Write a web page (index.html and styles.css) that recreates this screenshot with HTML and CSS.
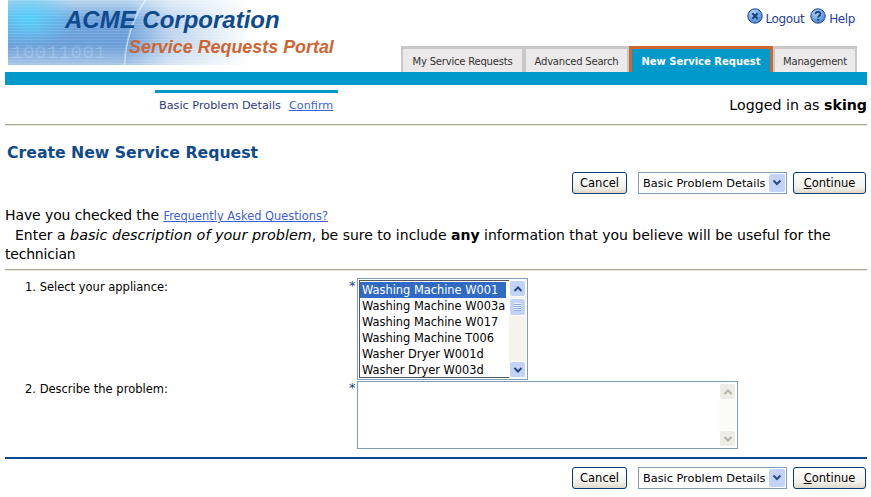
FILE: index.html
```html
<!DOCTYPE html>
<html lang="en-US">
<head>
    <title>Create New Service Request</title>
    <meta charset="utf-8">
    <link rel="stylesheet" href="styles.css">
</head>
<body>
    <div class="header">
        <div class="logo">
            <span class="logo-bits">10011001</span>
            <span class="logo-title">ACME Corporation</span>
            <span class="logo-sub">Service Requests Portal</span>
        </div>
        <div class="header-right">
            <div class="global-links">
                <svg class="icon" viewBox="0 0 16 16"><defs><radialGradient id="ball" cx="40%" cy="30%" r="75%"><stop offset="0" stop-color="#b5d6f7"/><stop offset="1" stop-color="#3f7fd0"/></radialGradient></defs><circle cx="8" cy="8" r="7.200" fill="url(#ball)" stroke="#1d4f91"/><path d="M5.300 5.300l5.400 5.400M10.700 5.300l-5.400 5.400" stroke="#123f80" stroke-width="2"/></svg>
                <a href="#">Logout</a>
                <svg class="icon" viewBox="0 0 16 16"><circle cx="8" cy="8" r="7.200" fill="url(#ball)" stroke="#1d4f91"/><path d="M5.600 6.200c0-3 4.800-3 4.800-.2 0 1.700-2.300 1.700-2.300 3.500" fill="none" stroke="#123f80" stroke-width="1.800"/><rect x="7.200" y="10.800" width="1.900" height="1.900" fill="#123f80"/></svg>
                <a href="#">Help</a>
            </div>
            <div class="tabs">
                <a class="tab tab-first" href="#">My Service Requests</a>
                <a class="tab tab-second" href="#">Advanced Search</a>
                <a class="tab tab-active" href="#">New Service Request</a>
                <a class="tab tab-last" href="#">Management</a>
            </div>
        </div>
    </div>
    <div class="bar"></div>

    <div class="subnav">
        <div class="steps">
            <span>Basic Problem Details</span>
            <a href="#">Confirm</a>
        </div>
        <div class="logged">Logged in as <b>sking</b></div>
    </div>

    <h1>Create New Service Request</h1>

    <div class="actions">
        <button class="btn btn-cancel">Cancel</button>
        <div class="combo">
            <span>Basic Problem Details</span>
            <span class="combo-arrow"><svg viewBox="0 0 10 8"><path d="M1.500 1.500L5 5l3.500-3.500" fill="none" stroke="#2c4a80" stroke-width="2"/></svg></span>
        </div>
        <button class="btn btn-continue"><u>C</u>ontinue</button>
    </div>

    <div class="intro">
        <p class="intro-check">Have you checked the <a href="#">Frequently Asked Questions?</a></p>
        <p class="intro-main">Enter a <i>basic description of your problem</i>, be sure to include <b>any</b> information that you believe will be useful for the <span class="last-word">technician</span></p>
    </div>

    <div class="form">
        <div class="row row-list">
            <label>1. Select your appliance:</label>
            <span class="star">*</span>
            <div class="listbox">
                <div class="options">
                    <div class="option selected">Washing Machine W001</div>
                    <div class="option">Washing Machine W003a</div>
                    <div class="option">Washing Machine W017</div>
                    <div class="option">Washing Machine T006</div>
                    <div class="option">Washer Dryer W001d</div>
                    <div class="option">Washer Dryer W003d</div>
                </div>
                <div class="scroll">
                    <span class="scroll-btn"><svg viewBox="0 0 10 8"><path d="M1.500 6L5 2.500 8.500 6" fill="none" stroke="#2c4a80" stroke-width="2"/></svg></span>
                    <span class="scroll-thumb"></span>
                    <span class="scroll-btn scroll-end"><svg viewBox="0 0 10 8"><path d="M1.500 2L5 5.500 8.500 2" fill="none" stroke="#2c4a80" stroke-width="2"/></svg></span>
                </div>
            </div>
        </div>
        <div class="row row-text">
            <label>2. Describe the problem:</label>
            <span class="star">*</span>
            <div class="textbox">
                <div class="scroll scroll-off">
                    <span class="scroll-btn"><svg viewBox="0 0 10 8"><path d="M1.500 6L5 2.500 8.500 6" fill="none" stroke="#b4b4a8" stroke-width="2"/></svg></span>
                    <span class="scroll-btn scroll-end"><svg viewBox="0 0 10 8"><path d="M1.500 2L5 5.500 8.500 2" fill="none" stroke="#b4b4a8" stroke-width="2"/></svg></span>
                </div>
            </div>
        </div>
    </div>

    <div class="footer-line"></div>

    <div class="actions actions-bottom">
        <button class="btn btn-cancel">Cancel</button>
        <div class="combo">
            <span>Basic Problem Details</span>
            <span class="combo-arrow"><svg viewBox="0 0 10 8"><path d="M1.500 1.500L5 5l3.500-3.500" fill="none" stroke="#2c4a80" stroke-width="2"/></svg></span>
        </div>
        <button class="btn btn-continue"><u>C</u>ontinue</button>
    </div>
</body>
</html>
```

FILE: styles.css
```css
* {
    box-sizing: border-box;
}
html {
    background-color: #fff;
}
body {
    margin: 0;
    padding: 0 4px 0 5px;
    height: 497px;
    overflow: hidden;
    font-family: "DejaVu Sans", sans-serif;
    color: #000;
}
a {
    color: #3d5fd0;
}
.header {
    display: flex;
    justify-content: space-between;
    height: 72px;
}
.logo {
    position: relative;
    width: 337px;
    height: 65px;
    margin-left: 3px;
    padding: 6px 0 0 57px;
    background:
        radial-gradient(ellipse 90px 110px at 205px 70px, rgba(255,255,255,0) 97%, rgba(255,255,255,.6) 98%, rgba(255,255,255,0) 100%),
        linear-gradient(90deg, rgba(255,255,255,0) 35%, rgba(255,255,255,.55) 48%, #fff 72%),
        repeating-linear-gradient(180deg, rgba(255,255,255,.1) 0, rgba(255,255,255,.1) 1px, rgba(255,255,255,0) 1px, rgba(255,255,255,0) 3px),
        radial-gradient(ellipse 50px 30px at 20px 18px, #55d0fb, rgba(85,208,251,0)),
        linear-gradient(180deg, #b8d6ee 0, #6fa3dc 30%, #6b9ed8 70%, #a6c6e8 100%);
    font-family: "Liberation Sans", sans-serif;
    font-weight: bold;
    font-style: italic;
}
.logo-bits {
    position: absolute;
    left: 3px;
    top: 42px;
    font-family: "Liberation Mono", monospace;
    font-size: 19px;
    font-style: normal;
    font-weight: normal;
    letter-spacing: .5px;
    color: rgba(255,255,255,.2);
}
.logo-title {
    position: relative;
    display: block;
    font-size: 24px;
    line-height: 27px;
    color: #0f4a8c;
}
.logo-sub {
    position: relative;
    display: block;
    margin: 4px 0 0 64px;
    font-size: 17.900px;
    line-height: 21px;
    color: #cc6633;
    white-space: nowrap;
}
.header-right {
    display: flex;
    flex-direction: column;
    align-items: flex-end;
    padding-right: 10px;
}
.global-links {
    display: flex;
    align-items: flex-start;
    height: 46px;
    padding: 8px 2px 0 0;
    font-size: 12px;
    line-height: 22px;
    letter-spacing: -.4px;
}
.global-links a {
    color: #1f3fa0;
    text-decoration: none;
    margin-left: 3px;
    margin-right: 6px;
}
.global-links a:last-child {
    margin-right: 0;
}
.icon {
    width: 16px;
    height: 16px;
}
.tabs {
    display: flex;
    height: 26px;
}
.tab {
    display: flex;
    align-items: center;
    justify-content: center;
    height: 26px;
    padding-top: 2px;
    border: solid #c8c8c8;
    border-width: 3px 2px 0;
    background-color: #ebe9e9;
    color: #333;
    font-size: 10px;
    letter-spacing: -.2px;
    text-decoration: none;
    white-space: nowrap;
}
.tab-first {
    width: 123px;
}
.tab-second {
    width: 105px;
}
.tab-active {
    width: 144px;
    border-color: #cc6633;
    border-width: 3px 3px 0;
    background-color: #0099cc;
    color: #fff;
    font-weight: bold;
    letter-spacing: 0;
}
.tab-last {
    width: 84px;
}
.bar {
    height: 13px;
    background-color: #0099cc;
}
.subnav {
    display: flex;
    justify-content: space-between;
    height: 40px;
    padding: 5px 0 0 150px;
    border-bottom: 1px solid #aca899;
    box-shadow: 0 1px #e8e6d8;
}
.steps {
    display: flex;
    gap: 8px;
    width: 183px;
    height: 24px;
    padding-left: 4px;
    border-top: 3px solid #0099cc;
    font-size: 11.250px;
    line-height: 25px;
    color: #2b3990;
}
.logged {
    padding-top: 6px;
    font-size: 14.200px;
    line-height: 18px;
}
h1 {
    margin: 18px 0 0 2px;
    height: 29px;
    font-size: 15.700px;
    line-height: 19px;
    color: #0f4a8c;
}
.actions {
    display: flex;
    align-items: center;
    justify-content: flex-end;
    height: 22px;
    padding-right: 1px;
}
.btn {
    height: 22px;
    padding: 0;
    border: 1px solid #003c74;
    border-radius: 3px;
    background: linear-gradient(180deg, #fff, #f3f2ea 70%, #dcd8ca);
    color: #000;
    font-family: "DejaVu Sans", sans-serif;
    font-size: 11.500px;
}
.btn-cancel {
    width: 55px;
}
.btn-continue {
    width: 73px;
}
.combo {
    display: flex;
    align-items: center;
    justify-content: space-between;
    width: 149px;
    height: 22px;
    margin: 0 6px 0 11px;
    padding: 1px 1px 0 4px;
    border: 1px solid #7f9db9;
    font-size: 11.300px;
    white-space: nowrap;
}
.combo-arrow {
    display: flex;
    align-items: center;
    justify-content: center;
    width: 16px;
    height: 18px;
    margin-bottom: 1px;
    border-radius: 2px;
    background: #c3d3f8;
}
.combo-arrow svg {
    width: 10px;
    height: 8px;
}
.intro {
    margin-top: 12px;
    height: 64px;
    padding-right: 30px;
    border-bottom: 1px solid #aca899;
    box-shadow: 0 1px #e8e6d8;
    font-size: 14px;
    line-height: 19px;
}
.intro p {
    margin: 0;
}
.intro-check {
    letter-spacing: -.1px;
}
.intro a {
    font-size: 11.400px;
    letter-spacing: 0;
}
.intro i {
    font-size: 14.400px;
}
.intro-main {
    text-indent: 10px;
}
.last-word {
    letter-spacing: -.2px;
}
.form {
    padding-top: 8px;
}
.row {
    display: flex;
    font-size: 11.500px;
}
.row label {
    width: 344px;
    padding: 1px 0 0 20px;
    line-height: 16px;
}
.row-text label {
    margin-top: -1px;
}
.star {
    width: 8px;
    color: #0f4a8c;
    font-size: 13px;
    line-height: 16px;
}
.row-text .star {
    margin-top: -1px;
}
.row-list {
    height: 103px;
}
.listbox {
    display: flex;
    width: 171px;
    height: 102px;
    padding: 1px;
    border: 1px solid #7f9db9;
    outline: 1px solid #fff;
    outline-offset: -2px;
    box-shadow: inset 0 0 0 2px #555;
}
.options {
    flex: 1;
    padding: 2px 0 0 1px;
    overflow: hidden;
}
.option {
    height: 16px;
    margin-right: 3px;
    padding-left: 2px;
    font-size: 11.400px;
    line-height: 16px;
    white-space: nowrap;
}
.selected {
    background-color: #316ac5;
    color: #fff;
}
.scroll {
    display: flex;
    flex-direction: column;
    width: 17px;
    background-color: #f5f4ec;
}
.scroll-btn {
    display: flex;
    align-items: center;
    justify-content: center;
    height: 17px;
    border: 1px solid #fff;
    border-radius: 3px;
    background-color: #c3d3f8;
}
.scroll-btn svg {
    width: 10px;
    height: 8px;
}
.scroll-thumb {
    height: 18px;
    margin-top: 1px;
    border: 1px solid #fff;
    border-radius: 3px;
    background:
        repeating-linear-gradient(180deg, #eef3fd 0, #eef3fd 1px, #8fa9e0 1px, #8fa9e0 2px) center / 7px 8px no-repeat,
        #c3d3f8;
}
.scroll-end {
    margin-top: auto;
}
.row-text {
    height: 68px;
}
.textbox {
    display: flex;
    justify-content: flex-end;
    width: 381px;
    height: 68px;
    padding: 1px;
    border: 1px solid #7f9db9;
}
.scroll-off {
    background-color: #fbfbf8;
}
.scroll-off .scroll-btn {
    background-color: #eeede5;
}
.footer-line {
    height: 2px;
    margin-top: 8px;
    background-color: #0f4a8c;
}
.actions-bottom {
    margin-top: 8px;
}
```
